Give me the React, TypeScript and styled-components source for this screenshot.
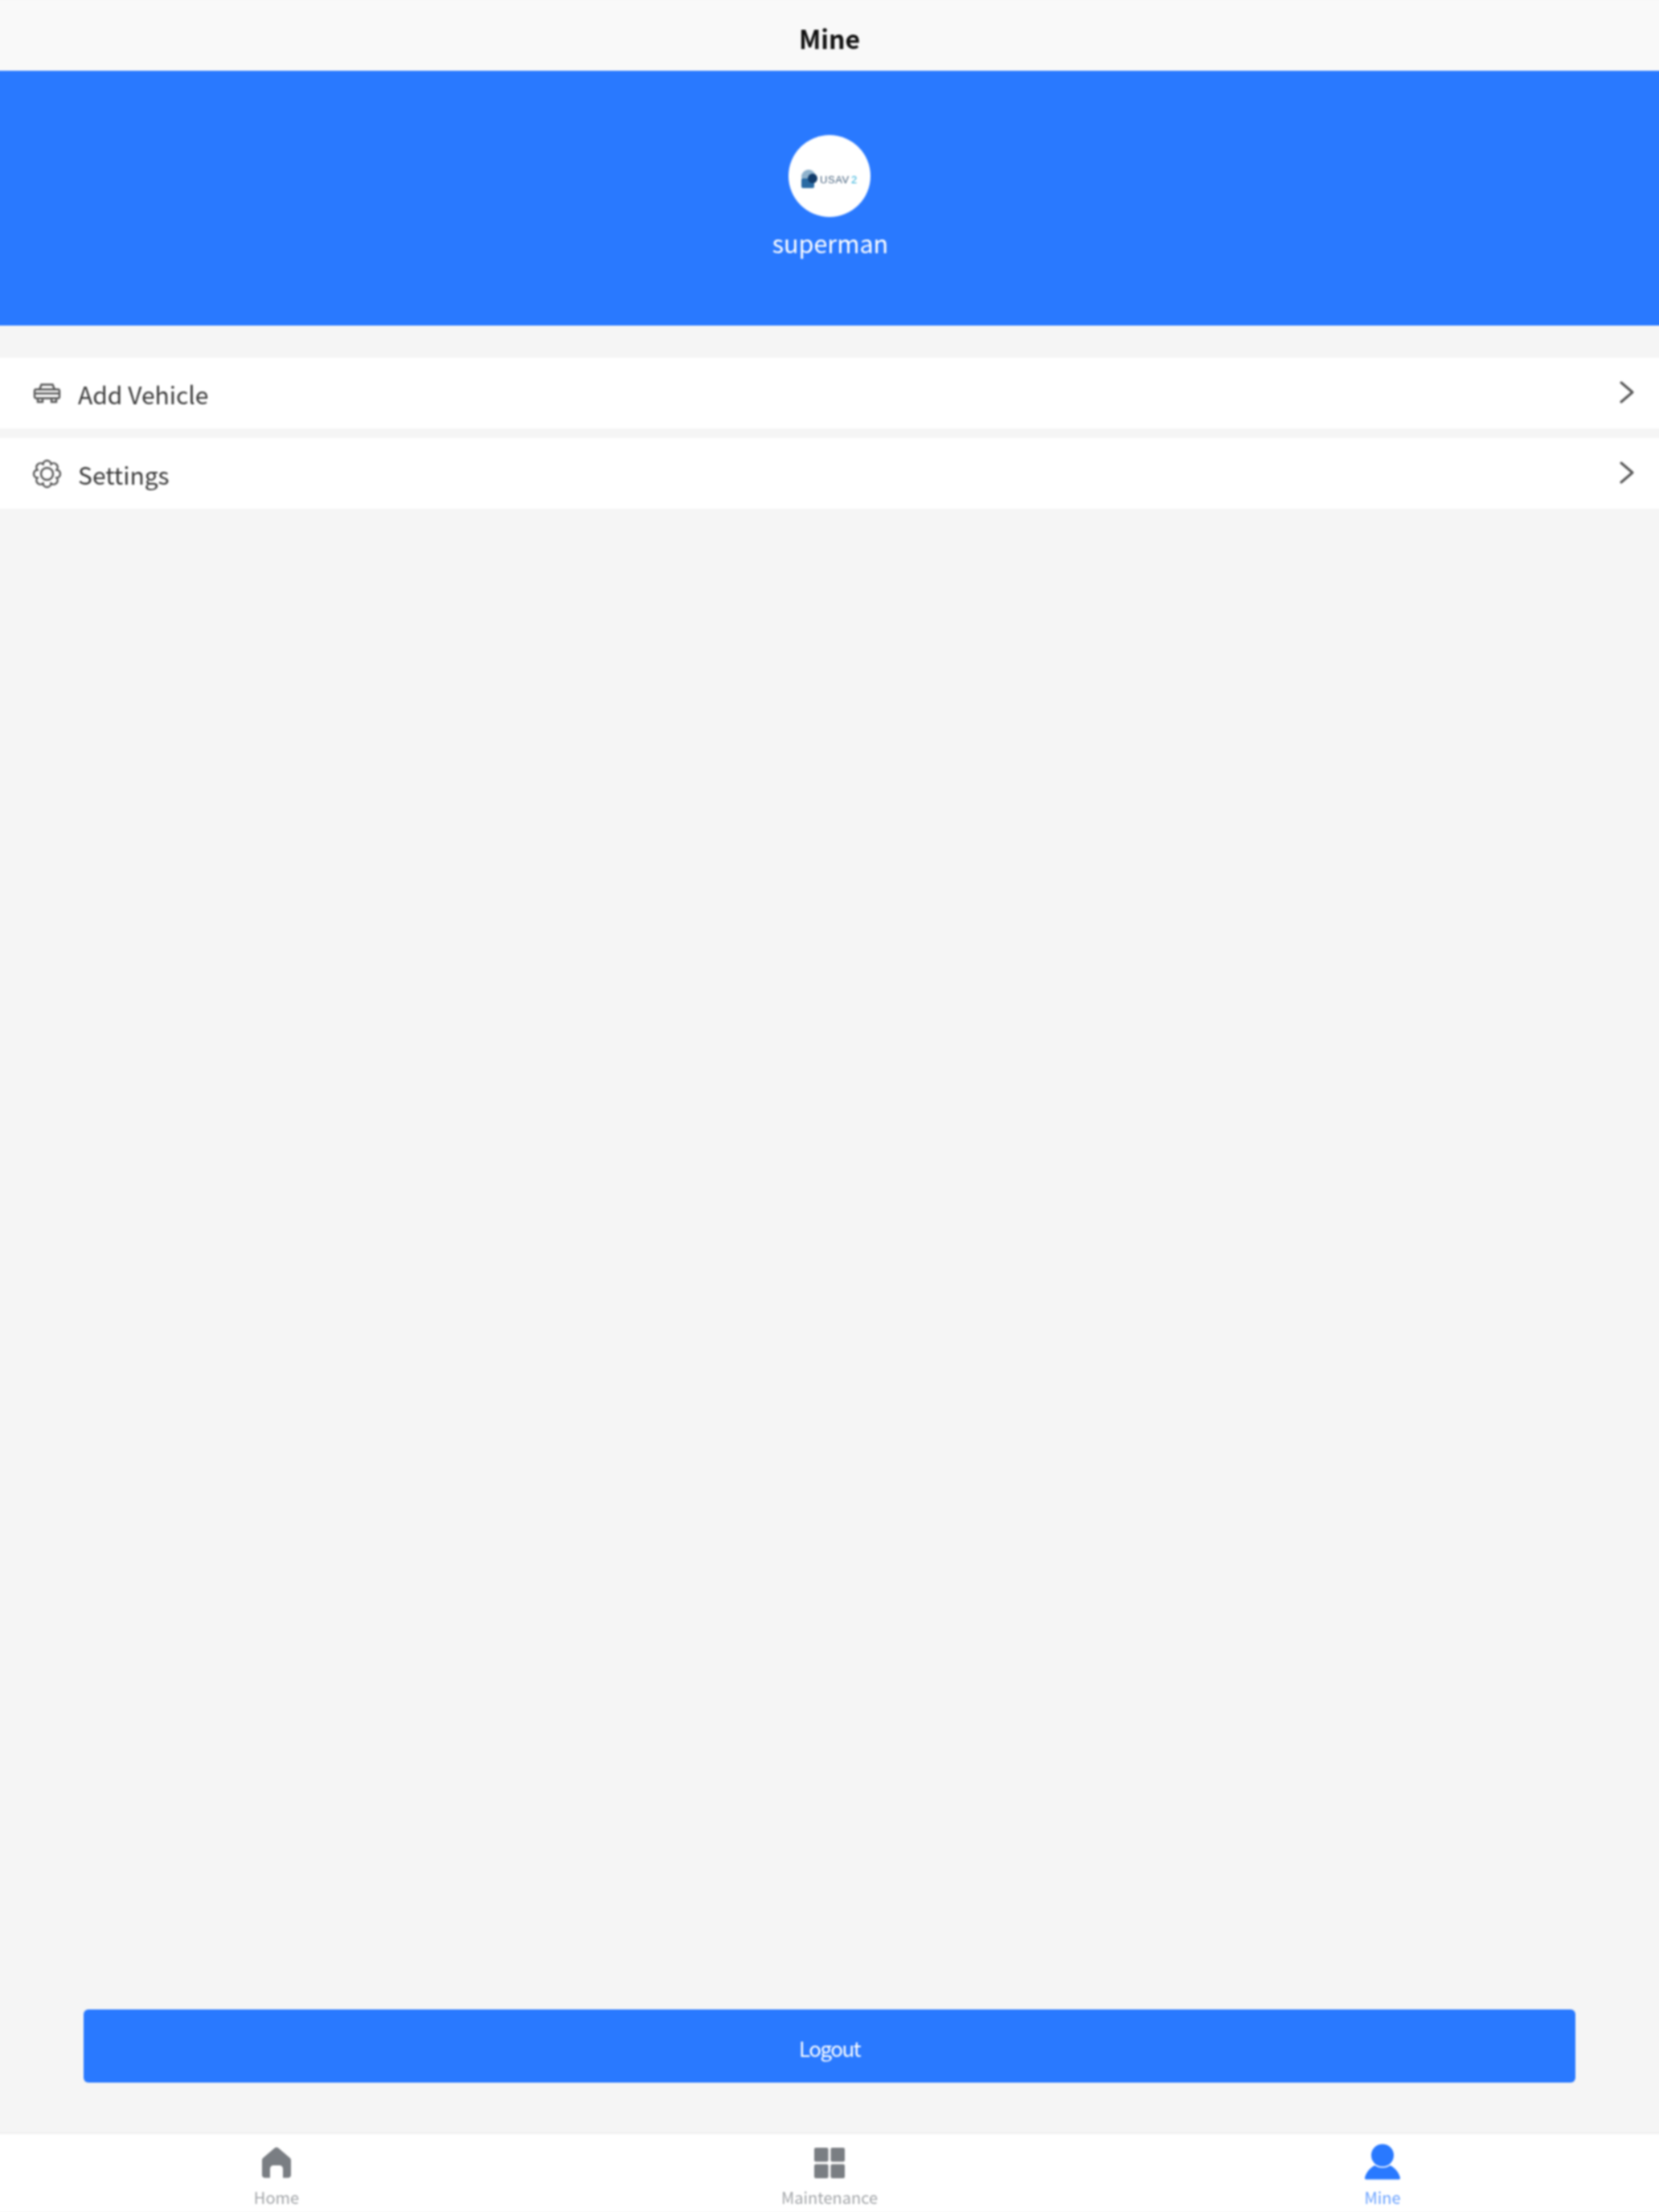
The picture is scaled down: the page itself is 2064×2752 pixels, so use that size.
import React from "react";
import styled, { createGlobalStyle } from "styled-components";

const GlobalStyle = createGlobalStyle`
  html, body {
    margin: 0;
    padding: 0;
    background: #f5f5f5;
    overflow: hidden;
  }
  * {
    box-sizing: border-box;
  }
`;

// the blur bleeds past the window edge so that the bands stay solid up to it
const Screen = styled.div`
  display: flex;
  flex-direction: column;
  height: 2752px;
  margin: 0 -6px;
  background: #f5f5f5;
  font-family: "Noto Sans CJK SC", "Noto Sans", sans-serif;
  filter: blur(0.9px);
`;

const TopBar = styled.header`
  display: flex;
  align-items: center;
  justify-content: center;
  height: 88px;
  padding-top: 5px;
  background: #f9f9f9;
  color: #111;
  font-size: 32px;
  font-weight: 700;
`;

const Profile = styled.section`
  display: flex;
  flex-direction: column;
  align-items: center;
  height: 317px;
  padding-top: 80px;
  background: #2979ff;
`;

const Avatar = styled.div`
  display: flex;
  align-items: center;
  justify-content: center;
  width: 102px;
  height: 102px;
  padding-top: 8px;
  border-radius: 50%;
  background: #fff;
`;

const UserName = styled.div`
  margin-top: 10px;
  padding-left: 2px;
  color: #fff;
  font-size: 30.5px;
  line-height: 44px;
`;

const Menu = styled.nav`
  display: flex;
  flex-direction: column;
  gap: 12px;
  margin-top: 40px;
`;

const Row = styled.div`
  display: flex;
  align-items: center;
  height: 88px;
  padding: 0 37px 0 46px;
  background: #fff;
  color: #3a3a3a;
  font-size: 30px;
`;

const RowIcon = styled.svg`
  flex: none;
  width: 37px;
  height: 37px;
  fill: none;
  stroke: #555;
  stroke-width: 2.4;
`;

const RowLabel = styled.span`
  flex: 1;
  margin-left: 20px;
  padding-top: 2px;
  line-height: 40px;
`;

const Chevron = styled.svg`
  flex: none;
  width: 18px;
  height: 28px;
  margin-top: -2px;
  fill: none;
  stroke: #555;
  stroke-width: 3;
  stroke-linecap: round;
  stroke-linejoin: round;
`;

const Spacer = styled.div`
  flex: 1;
`;

const LogoutWrap = styled.div`
  padding: 0 110px 62px;
`;

const LogoutButton = styled.button`
  display: block;
  width: 100%;
  height: 91px;
  padding-top: 4px;
  border: 0;
  border-radius: 6px;
  background: #2979ff;
  color: #fff;
  font-family: inherit;
  font-size: 26px;
  letter-spacing: -1.5px;
`;

const TabBar = styled.footer`
  display: grid;
  grid-template-columns: repeat(3, 1fr);
  height: 99px;
  padding: 0 6px;
  border-top: 2px solid #efefef;
  background: #fff;
`;

const Tab = styled.div<{ $active?: boolean }>`
  display: flex;
  flex-direction: column;
  align-items: center;
  color: ${(p) => (p.$active ? "#2979ff" : "#7a7e83")};
`;

const TabIcon = styled.svg`
  width: 50px;
  height: 50px;
  margin-top: 11px;
  fill: currentColor;
`;

const TabLabel = styled.span`
  margin-top: 5px;
  font-size: 20px;
  line-height: 26px;
  opacity: 0.7;
`;

const CarIcon = () => (
  <RowIcon viewBox="0 0 37 37">
    <path d="M9 14l2.500-6.500h14L28 14" />
    <path d="M3 15.500c0-1 1-2 2-2h27c1 0 2 1 2 2v7c0 1-1 2-2 2H5c-1 0-2-1-2-2z" />
    <path d="M3 18.500h31" />
    <path d="M7 25v4h6v-4M24 25v4h6v-4" />
  </RowIcon>
);

// eight scallops around the hub, as one closed outline
const gearPoints = Array.from({ length: 9 }, (_, i) => {
  const a = ((i * 45 + 22.5) * Math.PI) / 180;
  return `${(18.5 + 13 * Math.sin(a)).toFixed(2)} ${(18.5 - 13 * Math.cos(a)).toFixed(2)}`;
});
const gearOutline = gearPoints
  .map((p, i) => (i === 0 ? `M${p}` : `A5 5 0 0 1 ${p}`))
  .join(" ");

const GearIcon = () => (
  <RowIcon viewBox="0 0 37 37">
    <path d={`${gearOutline} Z`} />
    <circle cx="18.500" cy="18.500" r="7.500" />
  </RowIcon>
);

const RowArrow = () => (
  <Chevron viewBox="0 0 18 28">
    <path d="M2 2l14 12L2 26" />
  </Chevron>
);

const Logo = () => (
  <svg width="76" height="26" viewBox="0 0 76 26">
    <circle cx="12" cy="10" r="9" fill="#8fb2cc" />
    <rect x="3" y="12" width="16" height="12" rx="2" fill="#2a6ba3" />
    <circle cx="17" cy="12" r="6" fill="#123c6b" />
    <text x="26" y="18" fontSize="13" letterSpacing="0.600" fontFamily="Liberation Sans, sans-serif" fill="#45617d">
      USAV
    </text>
    <text x="65" y="18" fontSize="13" fontFamily="Liberation Sans, sans-serif" fill="#1fa9d6">
      2
    </text>
  </svg>
);

export default function App() {
  return (
    <Screen>
      <GlobalStyle />
      <TopBar>Mine</TopBar>
      <Profile>
        <Avatar>
          <Logo />
        </Avatar>
        <UserName>superman</UserName>
      </Profile>
      <Menu>
        <Row>
          <CarIcon />
          <RowLabel>Add Vehicle</RowLabel>
          <RowArrow />
        </Row>
        <Row>
          <GearIcon />
          <RowLabel>Settings</RowLabel>
          <RowArrow />
        </Row>
      </Menu>
      <Spacer />
      <LogoutWrap>
        <LogoutButton>Logout</LogoutButton>
      </LogoutWrap>
      <TabBar>
        <Tab>
          <TabIcon viewBox="0 0 50 50">
            <path d="M25 5.500c.8 0 1.500.3 2.100.8l14.400 12.200c.9.8 1.500 1.800 1.500 3V40c0 2-1.600 3.500-3.500 3.500H33V32c0-2.200-1.800-4-4-4h-8c-2.200 0-4 1.800-4 4v11.500h-6.500C8.600 43.500 7 42 7 40V21.500c0-1.200.6-2.200 1.500-3L22.900 6.300c.6-.5 1.300-.8 2.100-.8z" />
          </TabIcon>
          <TabLabel>Home</TabLabel>
        </Tab>
        <Tab>
          <TabIcon viewBox="0 0 50 50">
            <rect x="6" y="6" width="17.500" height="17.500" rx="2" />
            <rect x="26.500" y="6" width="17.500" height="17.500" rx="2" />
            <rect x="6" y="26.500" width="17.500" height="17.500" rx="2" />
            <rect x="26.500" y="26.500" width="17.500" height="17.500" rx="2" />
          </TabIcon>
          <TabLabel>Maintenance</TabLabel>
        </Tab>
        <Tab $active>
          <TabIcon viewBox="0 0 50 50">
            <circle cx="25" cy="15.500" r="14" />
            <path d="M15.500 28c2.500 2 5.800 3 9.500 3s7-1 9.500-3C41 31 46 38 47 43.500c.2 1.200-.5 2-1.700 2H4.700c-1.200 0-1.900-.8-1.700-2C4 38 9 31 15.500 28z" />
          </TabIcon>
          <TabLabel>Mine</TabLabel>
        </Tab>
      </TabBar>
    </Screen>
  );
}
